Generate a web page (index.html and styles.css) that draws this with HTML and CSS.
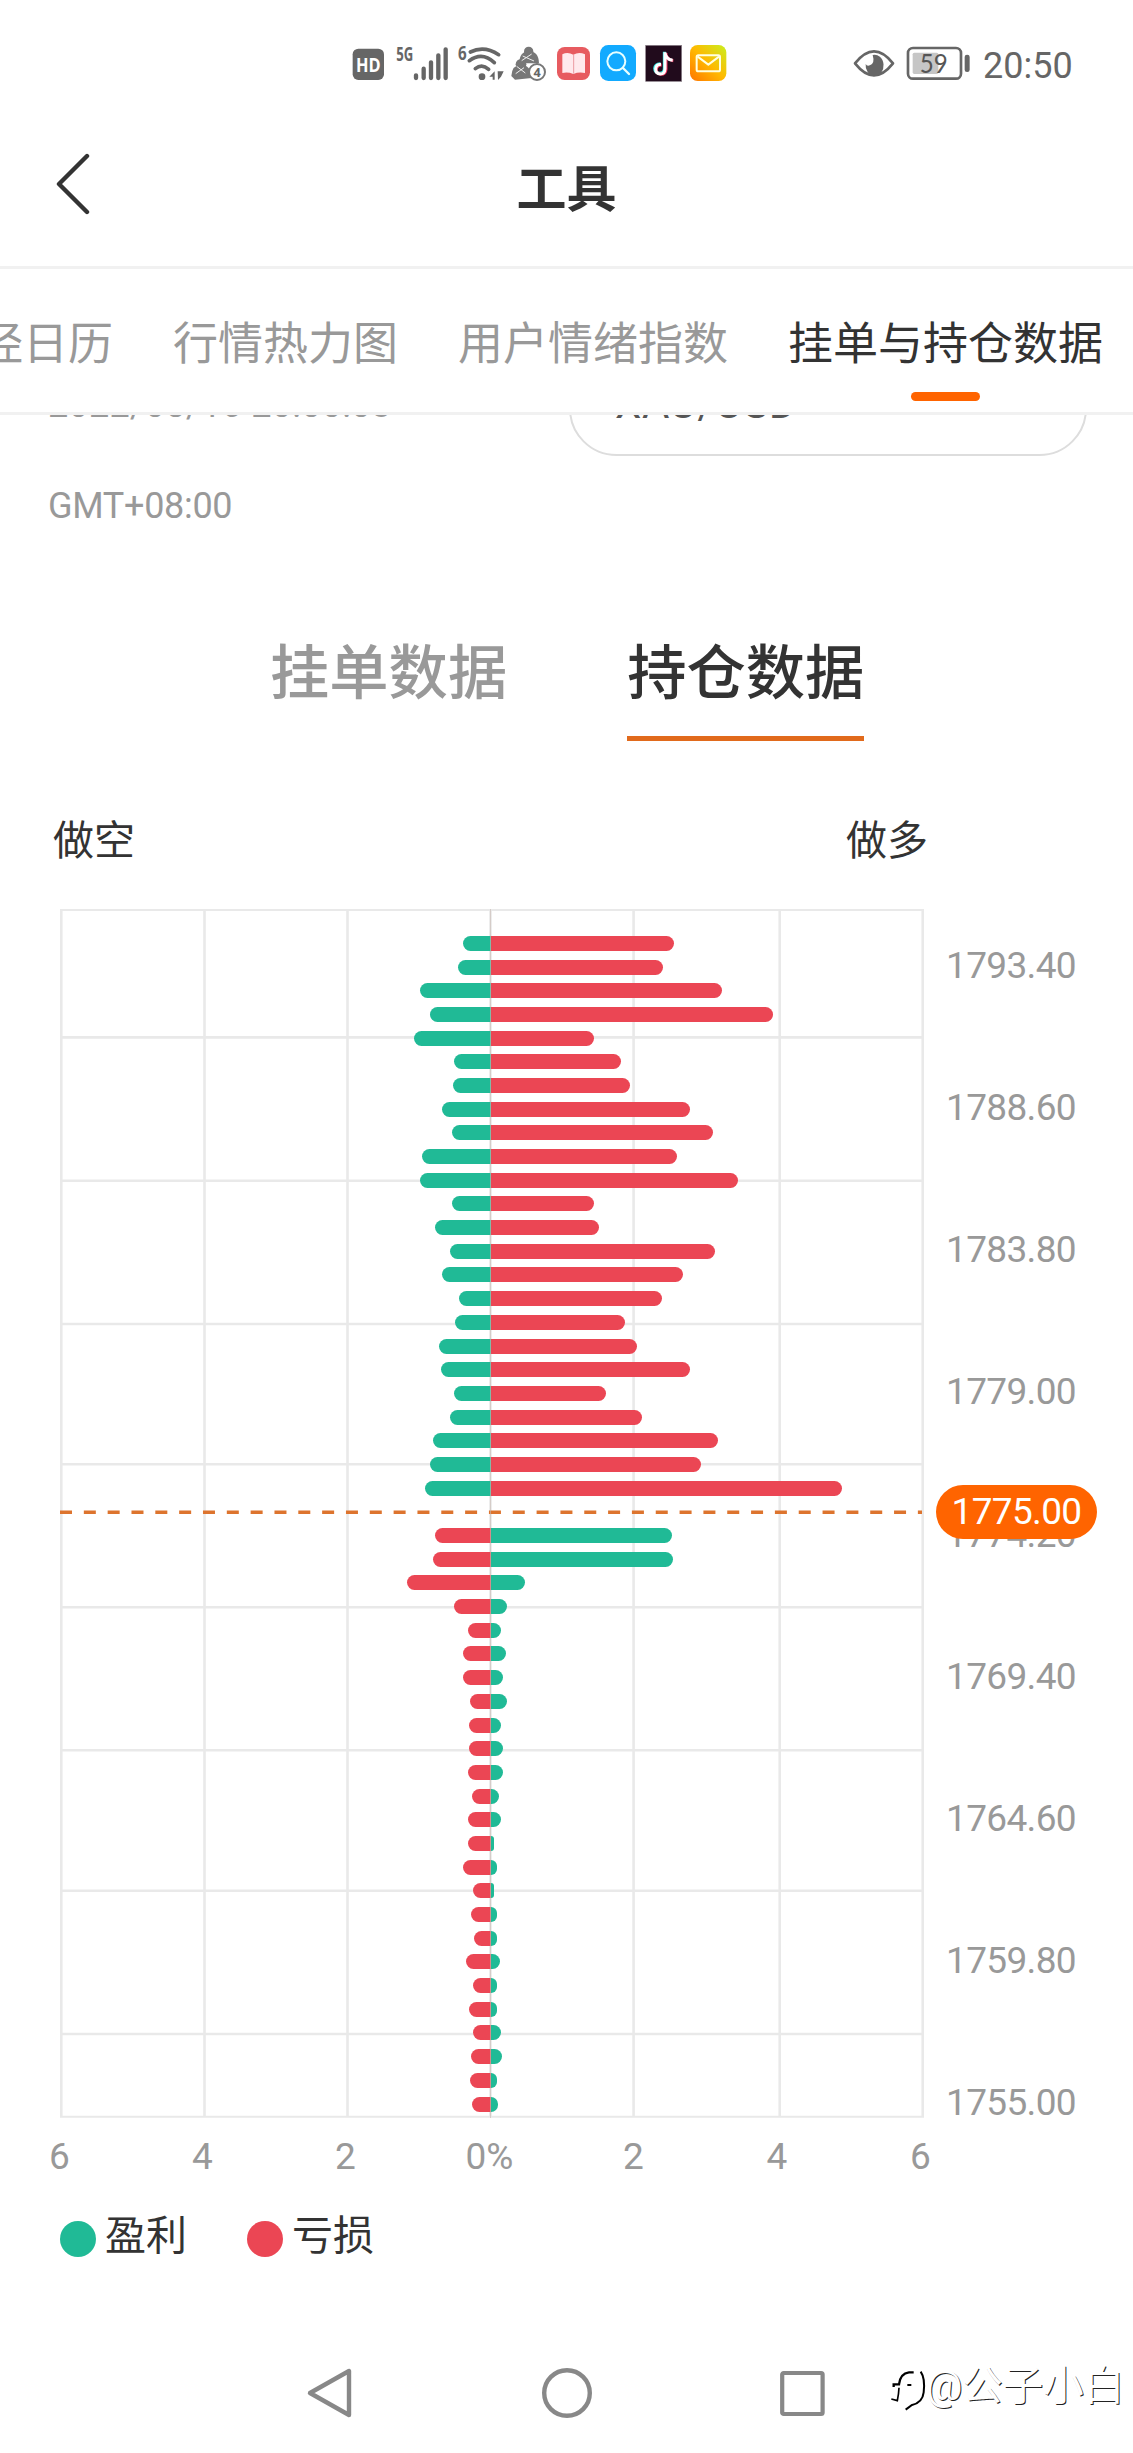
FILE: index.html
```html
<!DOCTYPE html>
<html lang="zh-CN">
<head>
<meta charset="utf-8">
<title>工具</title>
<link rel="stylesheet" href="styles.css">
</head>
<body>
<div class="status">
  <div class="status-icons">
    <svg width="38" height="45" viewBox="36 30 114 135"><rect x="38" y="56" width="94" height="94" rx="17" fill="#666"/><text x="85" y="125" text-anchor="middle" textLength="74" lengthAdjust="spacingAndGlyphs" font-size="60" font-weight="700" fill="#fff">HD</text></svg>
    <svg width="65" height="45" viewBox="150 30 195 135"><text x="169" y="94" textLength="51" lengthAdjust="spacingAndGlyphs" font-size="60" font-weight="700" fill="#666">5G</text><g stroke="#666" stroke-width="13" stroke-linecap="round"><path d="M228 136v8M251 116v28M273 97v47M295 76v68M317 58v86"/></g></svg>
    <svg width="53" height="45" viewBox="345 30 159 135"><text x="354" y="90" textLength="26" lengthAdjust="spacingAndGlyphs" font-size="58" font-weight="700" fill="#666">6</text><g fill="none" stroke="#666" stroke-width="11" stroke-linecap="round"><path d="M391 66q42-20 85 8M388 92q39-28 75 6M406 116q20-16 40 2"/></g><circle cx="426" cy="140" r="10" fill="#666"/><path d="M464 124v25h-6v-9h-10zM473 124h18l-8 16-9 10z" fill="#666"/></svg>
    <svg width="44" height="45" viewBox="504 30 132 135"><g fill="#777"><circle cx="566" cy="64" r="14"/><path d="M538 100q0-36 29-36t30 36z"/><circle cx="543" cy="103" r="16"/><path d="M514 138q2-34 30-34t31 40l-50 5z"/></g><g fill="none" stroke="#eee" stroke-width="3"><path d="M548 78l34 15M545 92l30-20M530 109l26 20M527 131l25-18"/></g><circle cx="591" cy="126" r="24" fill="#fff" stroke="#777" stroke-width="6"/><text x="591" y="140" text-anchor="middle" font-size="38" font-weight="700" fill="#666">4</text></svg>
    <svg width="44" height="45" viewBox="636 30 132 135"><rect x="651" y="51" width="99" height="99" rx="23" fill="#e75b60"/><path d="M667 73q16-9 33 1 17-10 35-1v56q-19-4-35 3-17-7-33-3z" fill="#ffe9ed"/><path d="M701 75v56" stroke="#eb9ba3" stroke-width="3"/></svg>
    <svg width="44" height="45" viewBox="768 30 132 135"><rect x="780" y="45" width="108" height="108" rx="25" fill="#12aaff"/><circle cx="829" cy="94" r="27" fill="none" stroke="#e8ffff" stroke-width="6"/><path d="M849 114l18 18" stroke="#e8ffff" stroke-width="7" stroke-linecap="round"/></svg>
    <svg width="46" height="45" viewBox="900 30 138 135"><rect x="917" y="46" width="108" height="108" fill="#210b1c" stroke="#8c818a" stroke-width="2"/><g fill="none" stroke-width="9"><path d="M973 65v50q0 15-14 15-15-2-15-15 1-13 17-14M973 68q3 20 22 22" stroke="#39e8e4"/><path d="M978 69v49q-1 15-15 15-15-2-14-15 1-13 16-13M977 71q5 19 23 21" stroke="#ef365e"/><path d="M975 67v50q-1 15-14 15-14-1-14-15 1-14 16-14M975 69q4 20 23 22" stroke="#fff"/></g></svg>
    <svg width="44" height="45" viewBox="1038 30 132 135"><defs><linearGradient id="mail" x1="0" y1="1" x2="1" y2="0"><stop offset="0" stop-color="#ff7500"/><stop offset=".5" stop-color="#ffb900"/><stop offset="1" stop-color="#c9ef20"/></linearGradient></defs><rect x="1050" y="45" width="109" height="108" rx="23" fill="url(#mail)"/><g fill="none" stroke="#ffffe0" stroke-width="6" stroke-linejoin="round"><rect x="1070" y="76" width="70" height="48" rx="5"/><path d="M1073 80l32 24 32-24"/></g></svg>
  </div>
  <div class="status-right">
    <svg width="50" height="45" viewBox="30 30 150 135"><path d="M45 100q57-72 114 0-57 72-114 0z" fill="none" stroke="#666" stroke-width="8" stroke-linejoin="round"/><path d="M98 75a27 32 0 1 1-21 27q4 8 14 3 14-6 7-30z" fill="#666"/></svg>
    <svg class="battery" width="70" height="45" viewBox="190 30 210 135"><rect x="219" y="68" width="77" height="64" rx="5" fill="#c6c6c6"/><rect x="205" y="54" width="159" height="92" rx="15" fill="none" stroke="#666" stroke-width="8"/><rect x="375" y="74" width="15" height="52" rx="7" fill="#666"/><text x="282" y="129" text-anchor="middle" textLength="84" lengthAdjust="spacingAndGlyphs" font-size="80" fill="#555">59</text></svg>
    <span class="clock">20:50</span>
  </div>
</div>

<header class="header">
  <svg class="back" width="36" height="64" viewBox="0 0 36 64"><path d="M33 4L5 32l28 28" fill="none" stroke="#333" stroke-width="4.4" stroke-linecap="round" stroke-linejoin="round"/></svg>
  <h1>工具</h1>
</header>

<nav class="tabs">
  <span class="tab">财经日历</span>
  <span class="tab">行情热力图</span>
  <span class="tab">用户情绪指数</span>
  <span class="tab active">挂单与持仓数据</span>
</nav>

<main class="content">
  <section class="filters">
    <div class="stamp"><span>2022/08/16 20:00:03</span><span>GMT+08:00</span></div>
    <div class="select">XAU/USD</div>
  </section>

  <div class="switch">
    <span class="switch-item">挂单数据</span>
    <span class="switch-item on">持仓数据</span>
  </div>

  <div class="sides"><span>做空</span><span>做多</span></div>

  <section class="chart">
    <div class="plot">
      <svg class="grid" width="864" height="1209" viewBox="0 0 864 1209">
        <g fill="none" stroke="#e9e9e9" stroke-width="2.6">
          <path d="M1.3 0v1208M144.5 0v1208M287.5 0v1208M430.5 0v1208M573.6 0v1208M719.7 0v1208M862.7 0v1208"/>
          <path d="M0 128.4h864M0 271.7h864M0 415h864M0 555.3h864M0 698.3h864M0 841.3h864M0 981.7h864M0 1125h864"/>
          <path d="M0 1h864M0 1207.7h864" stroke-width="2"/>
        </g>
        <path d="M0 603.2h862" fill="none" stroke="#dd742e" stroke-width="3.6" stroke-dasharray="12 11.83"/>
      </svg>
      <div class="rows" id="rows"></div>
      <div class="zero"></div>
    </div>
    <div class="prices">
      <span>1793.40</span><span>1788.60</span><span>1783.80</span><span>1779.00</span><span>1774.20</span><span>1769.40</span><span>1764.60</span><span>1759.80</span><span>1755.00</span>
      <div class="current">1775.00</div>
    </div>
  </section>

  <div class="axis"><span>6</span><span>4</span><span>2</span><span>0%</span><span>2</span><span>4</span><span>6</span></div>

  <div class="legend">
    <span class="key"><i class="dot profit"></i>盈利</span>
    <span class="key"><i class="dot loss"></i>亏损</span>
  </div>
</main>

<footer class="navbar">
  <svg width="52" height="56" viewBox="0 0 52 56"><path d="M44 6v44L5 28z" fill="none" stroke="#888" stroke-width="4.4" stroke-linejoin="round"/></svg>
  <svg width="52" height="56" viewBox="0 0 52 56"><circle cx="26" cy="28" r="22.8" fill="none" stroke="#888" stroke-width="4.4"/></svg>
  <svg width="52" height="56" viewBox="0 0 52 56"><rect x="6.2" y="8" width="40.4" height="41" rx="1.5" fill="none" stroke="#888" stroke-width="4.2"/></svg>
  <div class="watermark">
    <svg width="40" height="48" viewBox="0 0 120 144"><g fill="none" stroke="#000"><path d="M14 66v-8h16q4-33 30-36h14" stroke-width="7"/><path d="M95 20q14 20 9 62-3 31-37 39l-17 13" stroke-width="6"/><path d="M30 68q-1 20-5 39l-18-5" stroke-width="5"/></g><path d="M55 60h12" stroke="#000" stroke-width="6"/></svg>
    <span>@公子小白</span>
  </div>
</footer>
<script src="chart.js"></script>
</body>
</html>
```
FILE: styles.css
```css
* { box-sizing: border-box; }

body {
  margin: 0;
  width: 1133px;
  height: 2453px;
  overflow: hidden;
  display: flex;
  flex-direction: column;
  background: #fff;
  color: #333;
  font-family: Roboto, "Noto Sans CJK SC", sans-serif;
}

svg { display: block; flex: none; }

/* status bar */
.status {
  height: 104px;
  padding: 40px 0 0 352px;
  display: flex;
}
.status-icons { display: flex; width: 498px; }
.status-icons svg { font-family: "Open Sans", sans-serif; }
.status-right { display: flex; color: #666; }
.status-right svg { font-family: Lato, sans-serif; }
.battery { margin-left: 3px; }
.clock { margin-left: 10px; font-size: 36px; line-height: 53px; }

/* title */
.header {
  height: 165px;
  border-bottom: 3px solid #f1f1f1;
  display: flex;
  padding-left: 54px;
}
.back { margin-top: 48px; }
.header h1 {
  margin: 49px 0 0;
  width: 953px;
  text-align: center;
  font-size: 50px;
  line-height: 74px;
  font-weight: 700;
}

/* scrolled tab strip */
.tabs {
  height: 146px;
  border-bottom: 3px solid #f1f1f1;
  display: flex;
  justify-content: flex-end;
  gap: 60px;
  padding: 43px 30px 0 0;
  overflow: hidden;
}
.tab {
  flex: none;
  font-size: 45px;
  line-height: 66px;
  color: #999;
  white-space: nowrap;
}
.tab.active {
  color: #333;
  display: flex;
  flex-direction: column;
  align-items: center;
}
.tab.active::after {
  content: "";
  width: 69px;
  height: 9px;
  margin-top: 14px;
  border-radius: 5px;
  background: #ff6400;
}

.content { height: 1885px; overflow: hidden; }

/* timestamp and instrument, partly scrolled under the tabs */
.filters {
  margin-top: -54px;
  height: 232px;
  display: flex;
  justify-content: space-between;
  padding: 0 46px 0 48px;
}
.stamp {
  padding-top: 4px;
  display: flex;
  flex-direction: column;
  font-size: 36px;
  color: #999;
}
.stamp span:first-child { height: 101px; line-height: 80px; letter-spacing: 0.25px; }
.stamp span:last-child { line-height: 80px; letter-spacing: -0.3px; }
.select {
  width: 518px;
  height: 95px;
  padding-left: 44px;
  border: 2px solid #ddd;
  border-radius: 48px;
  font-size: 42px;
  line-height: 82px;
  letter-spacing: 0.6px;
  color: #555;
}

.switch {
  display: flex;
  gap: 120px;
  padding: 37px 0 0 270px;
  height: 190px;
}
.switch-item {
  height: 111px;
  font-size: 59.3px;
  line-height: 88px;
  font-weight: 500;
  color: #999;
}
.switch-item.on { color: #333; border-bottom: 5px solid #e16a1c; }

.sides {
  display: flex;
  justify-content: space-between;
  width: 928px;
  height: 126px;
  padding: 28px 0 0 53px;
  font-size: 41px;
  line-height: 60px;
}

/* positions chart */
.chart { display: flex; padding-left: 60px; height: 1209px; }
.plot { display: grid; width: 864px; height: 1209px; }
.plot > * { grid-area: 1 / 1; }
.rows { padding-top: 22.5px; }
.row { display: flex; height: 23.69px; align-items: center; }
.half { display: flex; width: 430.5px; }
.half.short { justify-content: flex-end; }
.bar { height: 15px; background: #20ba96; }
.bar.loss { background: #eb4654; }
.short .bar { border-radius: 7.5px 0 0 7.5px; }
.long .bar { border-radius: 0 7.5px 7.5px 0; }
.zero { width: 1px; height: 1209px; margin-left: 430px; background: rgba(200, 185, 178, .6); }

.prices {
  position: relative;
  margin: -14px 0 0 22px;
  display: flex;
  flex-direction: column;
  font-size: 37px;
  letter-spacing: -0.65px;
  color: #999;
}
.prices span { flex: none; height: 142.14px; line-height: 142.14px; }
.current {
  position: absolute;
  left: -10px;
  top: 590px;
  width: 161px;
  height: 54px;
  border-radius: 27px;
  background: #ff6400;
  color: #fff;
  line-height: 53px;
  text-align: center;
}

.axis {
  display: grid;
  grid-template-columns: 143px 143px 143px 145px 143px 144px 143px;
  margin: 17px 0 0 -12px;
  text-align: center;
  font-size: 37px;
  line-height: 44px;
  color: #999;
}

.legend {
  display: flex;
  gap: 60px;
  padding: 27px 0 0 60px;
  font-size: 41px;
  line-height: 60px;
}
.key { display: flex; gap: 9px; }
.dot { width: 36px; height: 36px; margin-top: 15px; border-radius: 50%; }
.dot.profit { background: #20ba96; }
.dot.loss { background: #eb4654; }

/* system navigation */
.navbar {
  height: 153px;
  display: flex;
  padding: 65px 0 0 305px;
}
.navbar > svg { margin-right: 183.5px; }
.navbar > svg:nth-child(3) { margin-right: 0; }
.watermark { display: flex; margin-left: 61px; color: #fff; font-size: 40.5px; line-height: 48px; white-space: nowrap; }
.watermark span { text-shadow: 1px 1px 0 #222; margin: -3px 0 0 -3px; }
```
FILE: chart.js
```js
// Bar lengths in thirds of a pixel, [short, long], from the highest price down.
const above = [
  [82, 550], [97, 518], [211, 693], [183, 848], [230, 309], [110, 390],
  [112, 418], [146, 599], [116, 668], [205, 560], [211, 742], [116, 311],
  [166, 324], [123, 672], [146, 578], [95, 513], [108, 404], [155, 440],
  [148, 597], [110, 347], [121, 453], [174, 681], [181, 632], [198, 1055]
];
const below = [
  [168, 543], [174, 546], [250, 102], [110, 50], [69, 32], [84, 46],
  [82, 38], [62, 48], [64, 30], [64, 38], [69, 38], [56, 26],
  [69, 30], [67, 10], [84, 18], [53, 11], [60, 20], [49, 20],
  [75, 28], [53, 18], [64, 18], [53, 31], [60, 35], [62, 20], [56, 22]
];

const half = (side, value, kind) =>
  `<div class="half ${side}"><div class="bar ${kind}" style="width:${(value / 3).toFixed(2)}px"></div></div>`;

const row = (pair, short, long) =>
  `<div class="row">${half("short", pair[0], short)}${half("long", pair[1], long)}</div>`;

document.getElementById("rows").innerHTML =
  above.map(p => row(p, "profit", "loss")).join("") +
  '<div class="row"></div>' +
  below.map(p => row(p, "loss", "profit")).join("");
```
